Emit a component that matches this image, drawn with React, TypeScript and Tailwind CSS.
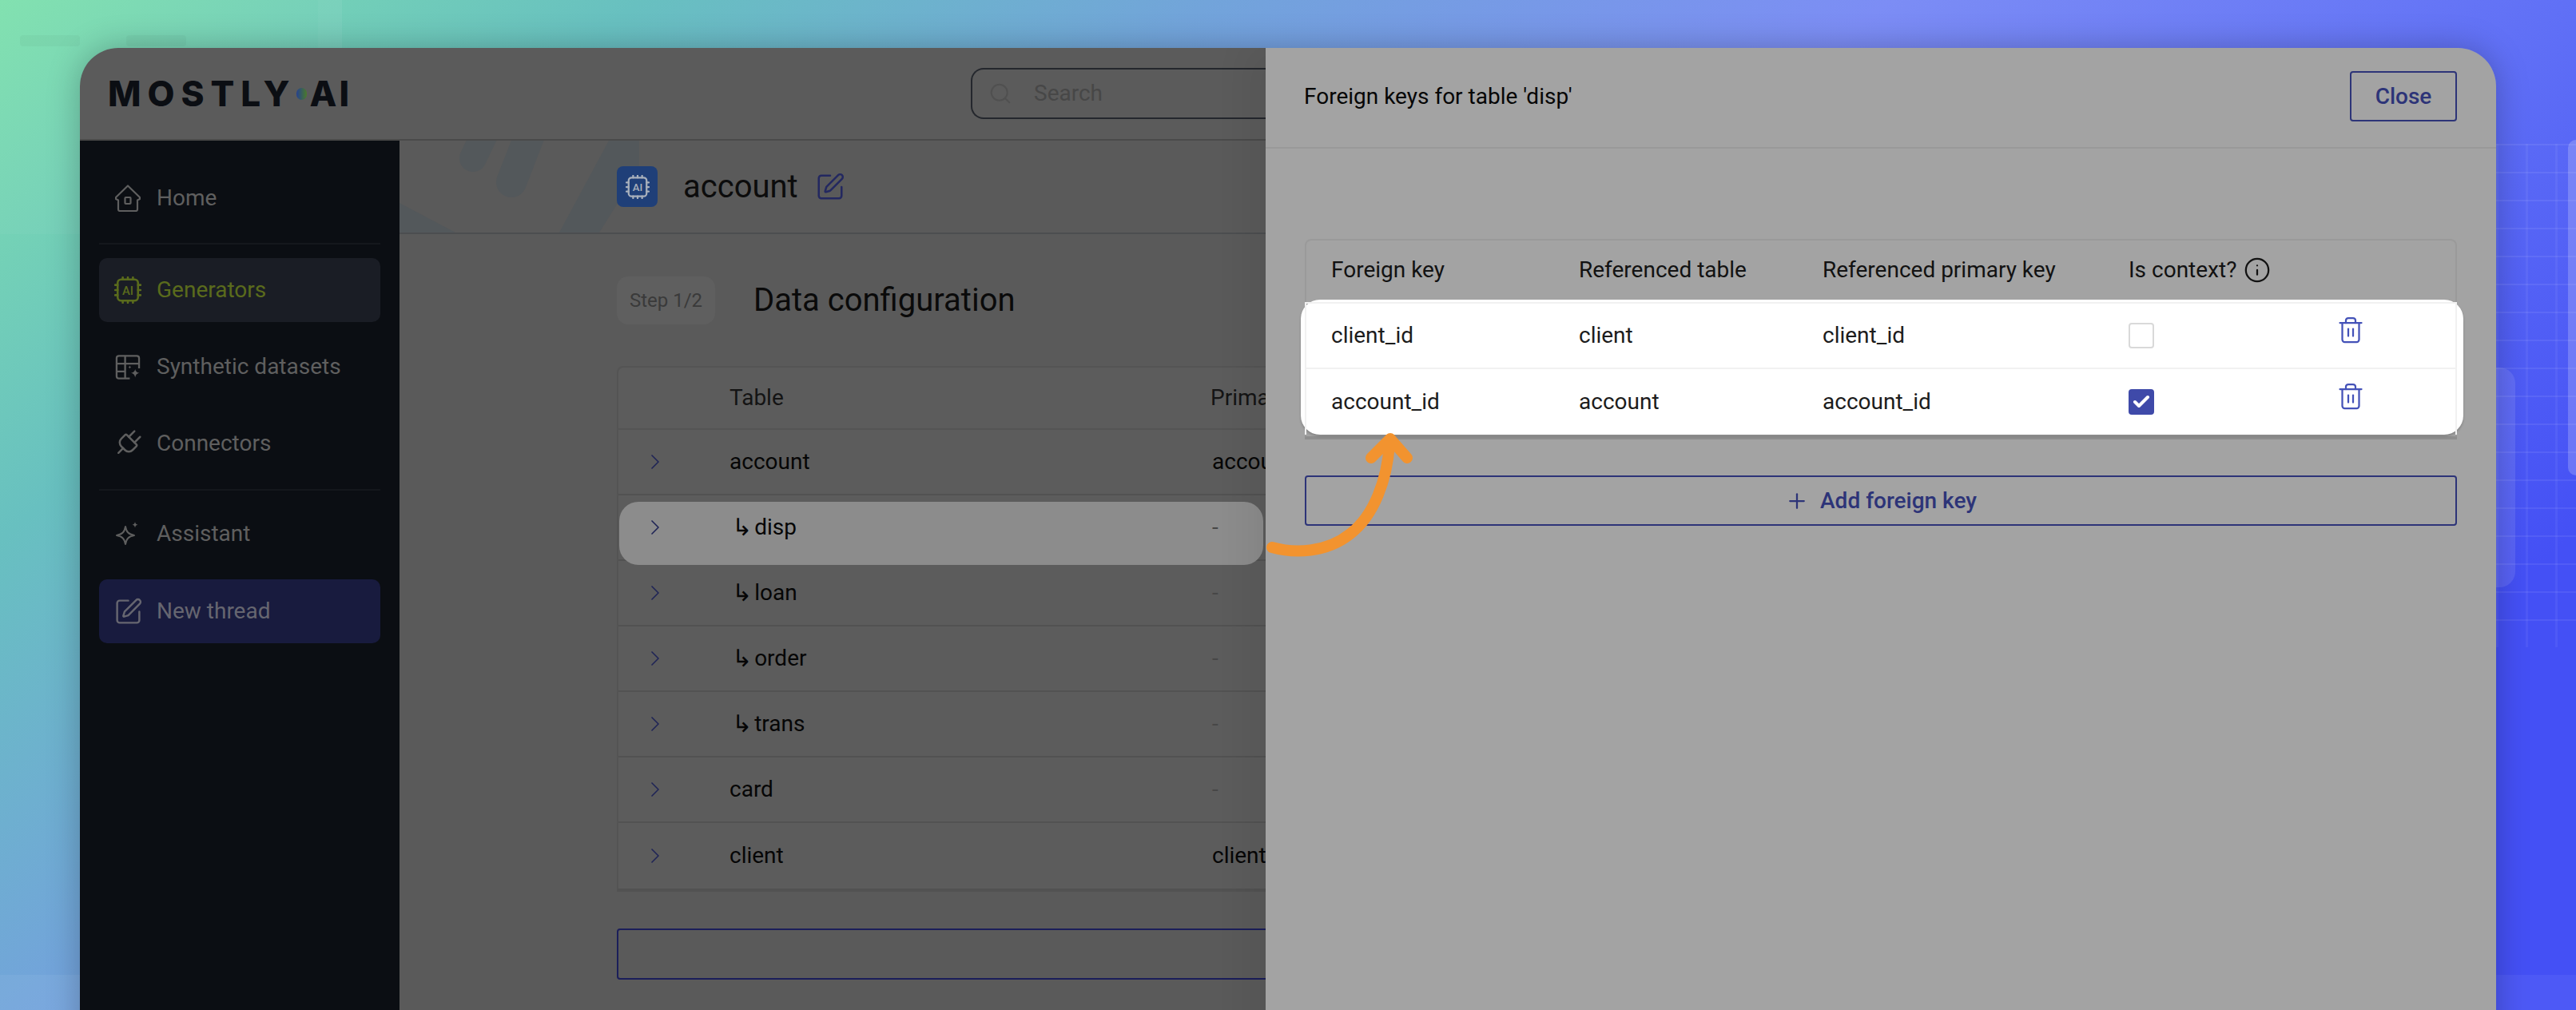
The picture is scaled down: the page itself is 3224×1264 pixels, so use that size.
import { Check, ChevronRight, Info, Plug, Plus, Search, SquarePen, Trash2 } from 'lucide-react';
import type { ReactNode } from 'react';

// AI chip icon, used in the sidebar and the generator badge
const ChipIcon = ({ className }: { className: string }) => (
  <svg viewBox="0 0 32 32" fill="none" stroke="currentColor" strokeWidth="2.4" className={className}>
    <rect x="4" y="3.500" width="24" height="25" rx="4" />
    <path d="M10 1v2.500M16 1v2.500M22 1v2.500M10 28.500V31M16 28.500V31M22 28.500V31M1 10h3M1 16h3M1 22h3M28 10h3M28 16h3M28 22h3" strokeLinecap="round" />
    <text x="16" y="21.500" textAnchor="middle" fontSize="14" fontWeight="500" fill="currentColor" stroke="none" fontFamily="Roboto, sans-serif">
      AI
    </text>
  </svg>
);

const HomeIcon = () => (
  <svg viewBox="0 0 32 34" fill="none" stroke="currentColor" strokeWidth="2.2" strokeLinejoin="round" className="h-[34px] w-[32px]">
    <path d="M16 1.500 31 16v2l-3 1.500V31a2 2 0 0 1-2 2H6a2 2 0 0 1-2-2V19.500L1 18v-2L16 1.500Z" />
    <rect x="12.500" y="16" width="7" height="8" rx="1" />
  </svg>
);

const DatasetIcon = () => (
  <svg viewBox="0 0 33 33" fill="none" stroke="currentColor" strokeWidth="2.4" className="h-[33px] w-[32px]">
    <path d="M19 31H5a3 3 0 0 1-3-3V5a3 3 0 0 1 3-3h23a3 3 0 0 1 3 3v13M2 12h29M2 22h12M13 2v29" />
    <path d="M26 19c.8 3 2 4.200 5.500 5-3.500.8-4.700 2-5.500 6-.8-4-2-5.200-5.500-6 3.500-.8 4.700-2 5.500-5Z" fill="currentColor" stroke="none" />
    <path d="M19 14.500c.3 1.200.8 1.700 2 2-1.200.3-1.700.8-2 2-.3-1.200-.8-1.700-2-2 1.200-.3 1.700-.8 2-2Z" fill="currentColor" stroke="none" />
  </svg>
);

const SparkIcon = () => (
  <svg viewBox="0 0 32 32" fill="none" stroke="currentColor" strokeWidth="2" strokeLinejoin="round" className="h-[36px] w-[36px]">
    <path d="M13 7c1.300 7 3.700 9.500 11 11-7.300 1.500-9.700 4-11 11-1.300-7-3.700-9.500-11-11 7.300-1.500 9.700-4 11-11Z" />
    <path d="M25 1c.5 2.500 1.200 3.200 3.500 3.700-2.300.5-3 1.200-3.500 3.800-.5-2.600-1.200-3.300-3.500-3.800 2.300-.5 3-1.200 3.500-3.700Z" fill="currentColor" stroke="none" />
  </svg>
);

interface NavItemProps {
  icon: ReactNode;
  label: string;
  className: string;
}

const NavItem = ({ icon, label, className }: NavItemProps) => (
  <div className={`flex h-[80px] items-center gap-[20px] rounded-[10px] pl-[20px] text-[28px] ${className}`}>
    <span className="flex w-[32px] items-center justify-center">{icon}</span>
    {label}
  </div>
);

const Sidebar = () => (
  <aside className="flex w-[400px] shrink-0 flex-col bg-[#0b0e13] px-[24px] pt-[32px]">
    <NavItem icon={<HomeIcon />} label="Home" className="text-[#5f5f5f]" />
    <div className="mt-[16px] h-[2px] bg-[#14171c]" />
    <NavItem icon={<ChipIcon className="h-[34px] w-[34px] shrink-0" />} label="Generators" className="mt-[17px] bg-[#1a1d25] text-[#5a6b1c]" />
    <NavItem icon={<DatasetIcon />} label="Synthetic datasets" className="mt-[16px] text-[#5f5f5f]" />
    <NavItem icon={<Plug size={40} strokeWidth={1.5} className="shrink-0 rotate-45" />} label="Connectors" className="mt-[16px] text-[#5f5f5f]" />
    <div className="mt-[17px] h-[2px] bg-[#14171c]" />
    <NavItem icon={<SparkIcon />} label="Assistant" className="mt-[14px] text-[#5f5f5f]" />
    <NavItem icon={<SquarePen size={37} strokeWidth={1.6} className="shrink-0" />} label="New thread" className="mt-[17px] bg-[#181b3e] text-[#666670]" />
  </aside>
);

const tableRows = [
  { name: 'account', key: 'account_id' },
  { name: 'disp', key: '-', child: true, highlight: true },
  { name: 'loan', key: '-', child: true },
  { name: 'order', key: '-', child: true },
  { name: 'trans', key: '-', child: true },
  { name: 'card', key: '-' },
  { name: 'client', key: 'client_id' },
];

const GeneratorContent = () => (
  <main className="flex min-w-0 flex-1 flex-col overflow-hidden bg-[#5a5a5a]">
    <div className="relative flex h-[117px] shrink-0 items-center border-b-2 border-[#4c4e50] pl-[272px]">
      {/* Faded brand strokes behind the title */}
      <svg viewBox="0 0 300 115" fill="none" className="absolute left-0 top-0 h-[115px] w-[300px]">
        <path d="M112 -20 92 22" stroke="#53585b" strokeWidth="34" strokeLinecap="round" />
        <path d="M168 -20 140 52" stroke="#53585b" strokeWidth="38" strokeLinecap="round" />
        <path d="M0 78 70 115H0Z" fill="#53585b" />
        <path d="M262 0h60L250 115h-50Z" fill="#53585b" />
      </svg>
      <div className="relative flex h-[51px] w-[51px] items-center justify-center rounded-[8px] bg-[#1f3f78] text-[#a8b0bc]">
        <ChipIcon className="h-[30px] w-[30px]" />
      </div>
      <h1 className="relative ml-[32px] text-[40px] leading-none text-[#0c0c0c]">account</h1>
      <SquarePen size={38} strokeWidth={1.6} className="relative ml-[21px] text-[#232860]" />
    </div>

    <div className="flex flex-col pl-[272px] pt-[53px]">
      <div className="flex items-center">
        <span className="flex h-[60px] w-[123px] items-center justify-center rounded-[14px] bg-[#5f5f5f] text-[24px] text-[#3a3a3a]">Step 1/2</span>
        <h2 className="ml-[48px] text-[40px] leading-none text-[#0a0a0a]">Data configuration</h2>
      </div>

      <div className="mt-[52px] w-[1700px] rounded-t-[8px] border-x-2 border-t-2 border-[#545454] bg-[#5c5c5c] shadow-[0_4px_0_#525252]">
        <div className="grid h-[78px] grid-cols-[139px_602px_1fr] items-center border-b-2 border-[#545454] text-[28px] text-[#141414]">
          <span />
          <span>Table</span>
          <span>Primary key</span>
        </div>
        {tableRows.map((row, index) => (
          <div
            key={row.name}
            className={`relative grid h-[82px] grid-cols-[139px_602px_1fr] items-center text-[28px] text-[#060606] ${
              index < tableRows.length - 1 ? 'border-b-2 border-[#525252]' : ''
            }`}
          >
            {row.highlight && <div className="absolute left-[1px] top-[8px] h-[79px] w-[806px] rounded-[24px] bg-[#8c8c8c]" />}
            <ChevronRight size={32} strokeWidth={1.25} className="relative ml-[30px] text-[#1f2456]" />
            <span className="relative flex items-center">
              {row.child && <span className="ml-[3px] mr-[3px] font-['DejaVu_Sans'] text-[30px] leading-none">↳</span>}
              {row.name}
            </span>
            <span className={`relative pl-[2px] ${row.key === '-' ? 'text-[#474747]' : ''}`}>{row.key}</span>
          </div>
        ))}
      </div>

      <div className="mt-[50px] h-[64px] w-[1700px] shrink-0 rounded-[4px] border-2 border-[#1b1e5a]" />
    </div>
  </main>
);

const foreignKeys = [
  { key: 'client_id', table: 'client', primary: 'client_id', context: false },
  { key: 'account_id', table: 'account', primary: 'account_id', context: true },
];

const ForeignKeysPanel = () => (
  <section className="relative z-10 flex w-[1540px] shrink-0 flex-col bg-[#a3a3a3] shadow-[-24px_0_40px_rgba(0,0,0,0.06)]">
    <header className="flex h-[126px] shrink-0 items-center justify-between border-b-2 border-[#999999] pl-[48px] pr-[49px]">
      <h3 className="mt-[-3px] text-[28px] font-normal text-[#060606]">Foreign keys for table 'disp'</h3>
      <button className="mt-[-3px] h-[63px] w-[134px] rounded-[4px] border-2 border-[#2d3478] text-[28px] font-medium text-[#2d3478]">Close</button>
    </header>

    <div className="flex flex-col pl-[49px] pr-[49px] pt-[113px]">
      <div className="rounded-t-[8px] border-x-2 border-t-2 border-[#9a9a9a] shadow-[0_4px_0_#8e8e8e]">
        <div className="grid h-[74px] grid-cols-[310px_305px_383px_260px_1fr] items-center pl-[31px] text-[28px] text-[#121212]">
          <span>Foreign key</span>
          <span>Referenced table</span>
          <span>Referenced primary key</span>
          <span className="flex items-center gap-[9px] whitespace-nowrap">
            Is context?
            <Info size={34} strokeWidth={1.6} />
          </span>
        </div>
        <div className="-ml-[7px] -mr-[10px] mb-[2px] rounded-[24px] bg-white pl-[5px] pr-[8px] pt-[3px] shadow-[0_2px_3px_rgba(0,0,0,0.2)]">
          <div className="border-x-2 border-t-2 border-[#f1f1f1]">
            {foreignKeys.map((fk, index) => (
              <div
                key={fk.key}
                className={`grid h-[82px] grid-cols-[310px_305px_383px_260px_1fr] items-center pl-[31px] text-[28px] text-[#1c1c1c] ${
                  index === 0 ? 'border-b-2 border-[#f1f1f1]' : ''
                }`}
              >
                <span>{fk.key}</span>
                <span>{fk.table}</span>
                <span>{fk.primary}</span>
                {fk.context ? (
                  <span className="flex h-[32px] w-[32px] items-center justify-center rounded-[4px] bg-[#3f4aa9] text-white">
                    <Check size={24} strokeWidth={4} />
                  </span>
                ) : (
                  <span className="h-[32px] w-[32px] rounded-[4px] border-2 border-[#d9d9d9] bg-white" />
                )}
                <Trash2 size={36} strokeWidth={1.5} className="mb-[14px] text-[#4452b8]" />
              </div>
            ))}
          </div>
        </div>
      </div>

      <button className="mt-[49px] flex h-[63px] items-center justify-center gap-[14px] rounded-[4px] border-2 border-[#2d3478] text-[28px] font-medium text-[#2d3478]">
        <Plus size={30} strokeWidth={1.8} />
        Add foreign key
      </button>
    </div>
  </section>
);

export default function App() {
  return (
    <div className="relative h-[1264px] w-[3224px] overflow-hidden bg-[linear-gradient(140deg,#7ee0ae_0%,#68c0c0_17%,#72a4da_32%,#7c8df5_50%,#6070f6_68%,#4450f5_85%,#4450f5_100%)] pl-[100px] pt-[60px] font-['Roboto',sans-serif]">
      {/* Faint page behind the app window */}
      <div className="absolute left-0 top-0 h-[293px] w-[428px] border-r-[30px] border-white/[0.03] bg-white/[0.03]" />
      <div className="absolute left-[25px] top-[44px] h-[14px] w-[75px] rounded bg-black/[0.03]" />
      <div className="absolute left-[158px] top-[44px] h-[14px] w-[75px] rounded bg-black/[0.03]" />
      <div className="absolute right-0 top-[180px] h-[630px] w-[100px] bg-[linear-gradient(to_bottom,rgba(255,255,255,0.07)_2px,transparent_2px),linear-gradient(to_right,rgba(255,255,255,0.05)_3px,transparent_3px)] bg-[length:37px_35px]" />
      <div className="absolute right-0 top-[175px] h-[420px] w-[10px] rounded-l-[10px] bg-white/20" />
      <div className="absolute left-[3124px] top-[460px] h-[275px] w-[24px] rounded-r-[20px] bg-white/10" />
      <div className="absolute bottom-0 left-0 h-[44px] w-full bg-white/5" />

      <div className="relative flex h-[1300px] w-[3024px] overflow-hidden rounded-t-[48px] shadow-[0_0_40px_rgba(0,0,0,0.25)]">
        <div className="flex w-[1484px] shrink-0 flex-col">
          <div className="flex h-[116px] shrink-0 items-center border-b-2 border-[#4a4a4a] bg-[#5b5b5b] pl-[35px]">
            <span className="flex w-[304px] shrink-0 items-center font-['Inter',sans-serif] text-[44px] font-extrabold leading-none text-[#0b0e13]">
              <span className="tracking-[8px]">MOSTLY</span>
              <span className="h-[15px] w-[13px] shrink-0 rounded-full bg-[linear-gradient(90deg,#26418f,#4a7a2a)]" />
              <span className="ml-[4px] tracking-[3px]">AI</span>
            </span>
            <div className="ml-[776px] flex h-[64px] flex-1 items-center gap-[27px] rounded-l-[16px] border-y-2 border-l-2 border-[#24272d] pl-[20px] text-[28px] text-[#474747]">
              <Search size={30} strokeWidth={1.6} className="text-[#505050]" />
              Search
            </div>
          </div>
          <div className="flex min-h-0 flex-1">
            <Sidebar />
            <GeneratorContent />
          </div>
        </div>
        <ForeignKeysPanel />
      </div>

      {/* Callout arrow pointing at the context row */}
      <svg viewBox="0 0 3224 1264" fill="none" stroke="#f2932f" strokeWidth="14" strokeLinecap="round" strokeLinejoin="round" className="pointer-events-none absolute left-0 top-0 z-20 h-[1264px] w-[3224px]">
        <path d="M1592 685C1620 693 1660 692 1690 668C1720 645 1736 600 1739 556" />
        <path d="M1716 573 1740 549 1761 573" />
      </svg>
    </div>
  );
}
